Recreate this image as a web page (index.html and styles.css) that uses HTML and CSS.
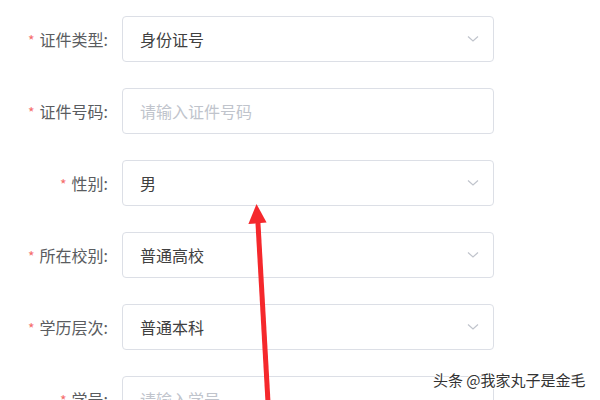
FILE: index.html
```html
<!DOCTYPE html>
<html lang="zh">
<head>
<meta charset="utf-8">
<link rel="stylesheet" href="styles.css">
</head>
<body>
<div class="form">
  <div class="row">
    <label class="label"><span class="req">*</span>证件类型:</label>
    <div class="box"><span class="value">身份证号</span><span class="chev"><svg width="12" height="8" viewBox="0 0 12 8"><path d="M1 1.5 L6 6 L11 1.5" fill="none" stroke="#c0c4cc" stroke-width="1.2"/></svg></span></div>
  </div>
  <div class="row">
    <label class="label"><span class="req">*</span>证件号码:</label>
    <div class="box"><span class="ph">请输入证件号码</span></div>
  </div>
  <div class="row">
    <label class="label"><span class="req">*</span>性别:</label>
    <div class="box"><span class="value">男</span><span class="chev"><svg width="12" height="8" viewBox="0 0 12 8"><path d="M1 1.5 L6 6 L11 1.5" fill="none" stroke="#c0c4cc" stroke-width="1.2"/></svg></span></div>
  </div>
  <div class="row">
    <label class="label"><span class="req">*</span>所在校别:</label>
    <div class="box"><span class="value">普通高校</span><span class="chev"><svg width="12" height="8" viewBox="0 0 12 8"><path d="M1 1.5 L6 6 L11 1.5" fill="none" stroke="#c0c4cc" stroke-width="1.2"/></svg></span></div>
  </div>
  <div class="row">
    <label class="label"><span class="req">*</span>学历层次:</label>
    <div class="box"><span class="value">普通本科</span><span class="chev"><svg width="12" height="8" viewBox="0 0 12 8"><path d="M1 1.5 L6 6 L11 1.5" fill="none" stroke="#c0c4cc" stroke-width="1.2"/></svg></span></div>
  </div>
  <div class="row">
    <label class="label"><span class="req">*</span>学号:</label>
    <div class="box"><span class="ph">请输入学号</span></div>
  </div>
</div>
<svg class="arrow" width="600" height="400" viewBox="0 0 600 400">
  <line x1="257.8" y1="220" x2="268" y2="402" stroke="#f5282c" stroke-width="5"/>
  <polygon points="256.5,204 248.4,224 266.6,222.6" fill="#f5282c"/>
</svg>
<div class="watermark">头条 @我家丸子是金毛</div>
</body>
</html>
```
FILE: styles.css
```css
html, body {
  margin: 0;
  padding: 0;
  background: #ffffff;
  width: 600px;
  height: 400px;
  overflow: hidden;
  font-family: "Noto Sans CJK SC", "Noto Sans", sans-serif;
}
.form {
  padding-top: 16px;
  display: flex;
  flex-direction: column;
  gap: 26px;
}
.row {
  display: flex;
  align-items: center;
  height: 46px;
}
.label {
  text-align: right;
  padding-right: 14px;
  box-sizing: border-box;
  width: 122px;
  font-size: 16px;
  color: #5a5c60;
  white-space: nowrap;
}
.req {
  color: #f56c6c;
  font-size: 14px;
  margin-right: 5px;
}
.box {
  width: 372px;
  height: 46px;
  box-sizing: border-box;
  border: 1px solid #dcdfe6;
  border-radius: 4px;
  display: flex;
  align-items: center;
  padding: 0 14px 0 17px;
  font-size: 16px;
}
.value {
  color: #404040;
  flex: 1;
}
.ph {
  color: #c0c4cc;
  flex: 1;
}
.chev {
  display: flex;
  align-items: center;
}
.arrow {
  position: absolute;
  left: 0;
  top: 0;
  pointer-events: none;
}
.watermark {
  position: absolute;
  left: 433px;
  top: 369px;
  font-size: 15px;
  color: #333333;
  white-space: nowrap;
  text-shadow: 1px 0 0 #fff, -1px 0 0 #fff, 0 1px 0 #fff, 0 -1px 0 #fff;
}
```
